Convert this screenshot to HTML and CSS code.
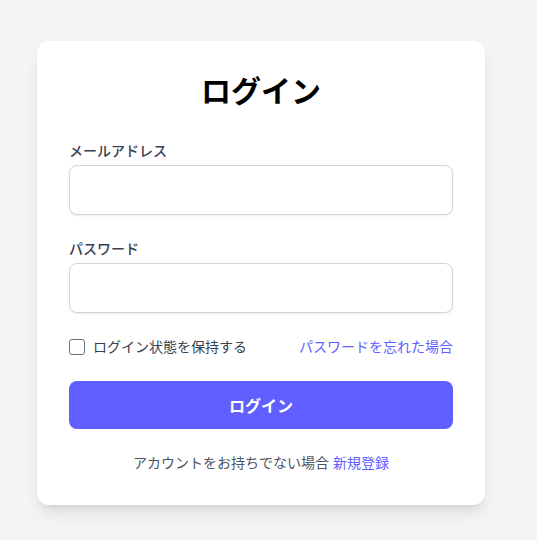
FILE: index.html
```html
<!DOCTYPE html>
<html lang="ja">

<head>
    <meta charset="UTF-8">
    <meta name="viewport" content="width=device-width, initial-scale=1.0">
    <title>ログイン</title>
    <link rel="stylesheet" href="styles.css">
</head>

<body>
    <div class="page">
        <div class="card">
            <h1 class="title">ログイン</h1>

            <form class="form">
                <div class="field">
                    <label for="email">メールアドレス</label>
                    <input type="email" id="email">
                </div>

                <div class="field">
                    <label for="password">パスワード</label>
                    <input type="password" id="password">
                </div>

                <div class="options">
                    <label class="remember">
                        <input type="checkbox">
                        <span>ログイン状態を保持する</span>
                    </label>
                    <a href="#" class="link">パスワードを忘れた場合</a>
                </div>

                <button type="submit" class="submit">ログイン</button>
            </form>

            <p class="signup">アカウントをお持ちでない場合 <a href="#" class="link">新規登録</a></p>
        </div>
    </div>
</body>

</html>
```

FILE: styles.css
```css
body {
    font-family: "Inter", "Noto Sans CJK JP", sans-serif;
    margin: 0;
    padding: 0;
    background-color: #f3f4f6;
}

.page {
    display: flex;
    justify-content: center;
    padding: 41px 15px 34px 0;
}

.card {
    width: 448px;
    box-sizing: border-box;
    padding: 32px;
    background-color: white;
    border-radius: 12px;
    box-shadow: 0 10px 15px -3px rgba(0, 0, 0, 0.1), 0 4px 6px -4px rgba(0, 0, 0, 0.1);
}

.title {
    margin: 0 0 32px;
    font-size: 30px;
    line-height: 36px;
    font-weight: 700;
    text-align: center;
    color: #000;
}

.form {
    display: flex;
    flex-direction: column;
    gap: 24px;
}

.field label {
    display: block;
    margin-bottom: 4px;
    font-size: 14px;
    line-height: 20px;
    font-weight: 500;
    color: #374151;
}

.field input {
    display: block;
    width: 100%;
    box-sizing: border-box;
    height: 50px;
    padding: 12px 16px;
    border: 1px solid #d1d5db;
    border-radius: 8px;
    box-shadow: 0 1px 2px rgba(0, 0, 0, 0.08);
    font-size: 16px;
    outline: none;
}

.options {
    display: flex;
    justify-content: space-between;
    align-items: center;
    font-size: 14px;
    line-height: 20px;
}

.remember {
    display: flex;
    align-items: center;
    color: #374151;
}

.remember input {
    appearance: none;
    width: 16px;
    height: 16px;
    margin: 0 8px 0 0;
    border: 1px solid #6b7280;
    border-radius: 3px;
    background: white;
}

.link {
    color: #615fff;
    text-decoration: none;
}

.submit {
    height: 48px;
    border: none;
    border-radius: 8px;
    background-color: #615fff;
    color: white;
    font-family: inherit;
    font-size: 16px;
    font-weight: 700;
    cursor: pointer;
}

.signup {
    margin: 24px 0 0;
    font-size: 14px;
    line-height: 20px;
    text-align: center;
    color: #4b5563;
}
```
